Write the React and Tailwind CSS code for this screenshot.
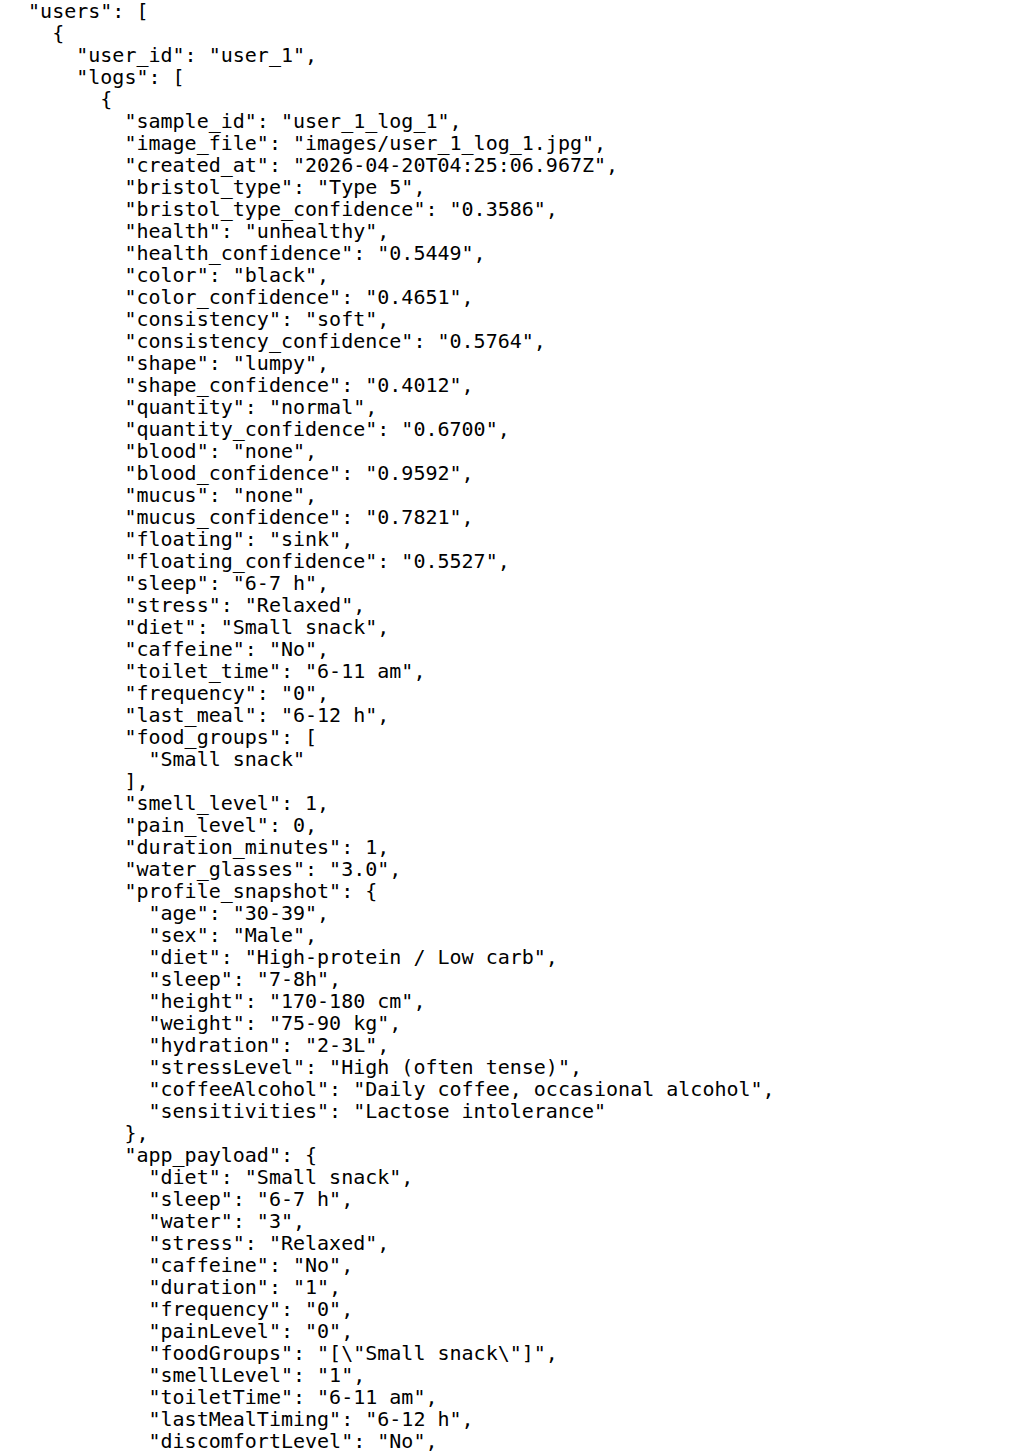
const lines = [
  '  "users": [',
  '    {',
  '      "user_id": "user_1",',
  '      "logs": [',
  '        {',
  '          "sample_id": "user_1_log_1",',
  '          "image_file": "images/user_1_log_1.jpg",',
  '          "created_at": "2026-04-20T04:25:06.967Z",',
  '          "bristol_type": "Type 5",',
  '          "bristol_type_confidence": "0.3586",',
  '          "health": "unhealthy",',
  '          "health_confidence": "0.5449",',
  '          "color": "black",',
  '          "color_confidence": "0.4651",',
  '          "consistency": "soft",',
  '          "consistency_confidence": "0.5764",',
  '          "shape": "lumpy",',
  '          "shape_confidence": "0.4012",',
  '          "quantity": "normal",',
  '          "quantity_confidence": "0.6700",',
  '          "blood": "none",',
  '          "blood_confidence": "0.9592",',
  '          "mucus": "none",',
  '          "mucus_confidence": "0.7821",',
  '          "floating": "sink",',
  '          "floating_confidence": "0.5527",',
  '          "sleep": "6-7 h",',
  '          "stress": "Relaxed",',
  '          "diet": "Small snack",',
  '          "caffeine": "No",',
  '          "toilet_time": "6-11 am",',
  '          "frequency": "0",',
  '          "last_meal": "6-12 h",',
  '          "food_groups": [',
  '            "Small snack"',
  '          ],',
  '          "smell_level": 1,',
  '          "pain_level": 0,',
  '          "duration_minutes": 1,',
  '          "water_glasses": "3.0",',
  '          "profile_snapshot": {',
  '            "age": "30-39",',
  '            "sex": "Male",',
  '            "diet": "High-protein / Low carb",',
  '            "sleep": "7-8h",',
  '            "height": "170-180 cm",',
  '            "weight": "75-90 kg",',
  '            "hydration": "2-3L",',
  '            "stressLevel": "High (often tense)",',
  '            "coffeeAlcohol": "Daily coffee, occasional alcohol",',
  '            "sensitivities": "Lactose intolerance"',
  '          },',
  '          "app_payload": {',
  '            "diet": "Small snack",',
  '            "sleep": "6-7 h",',
  '            "water": "3",',
  '            "stress": "Relaxed",',
  '            "caffeine": "No",',
  '            "duration": "1",',
  '            "frequency": "0",',
  '            "painLevel": "0",',
  '            "foodGroups": "[\\"Small snack\\"]",',
  '            "smellLevel": "1",',
  '            "toiletTime": "6-11 am",',
  '            "lastMealTiming": "6-12 h",',
  '            "discomfortLevel": "No",',
];

export default function App() {
  return (
    <div className="w-[1020px] h-[1452px] overflow-hidden bg-white">
      <pre className="m-0 pl-[4px] pt-0 text-[20px] leading-[22px] text-black font-['DejaVu_Sans_Mono',monospace] whitespace-pre">
        {lines.join("\n")}
      </pre>
    </div>
  );
}
